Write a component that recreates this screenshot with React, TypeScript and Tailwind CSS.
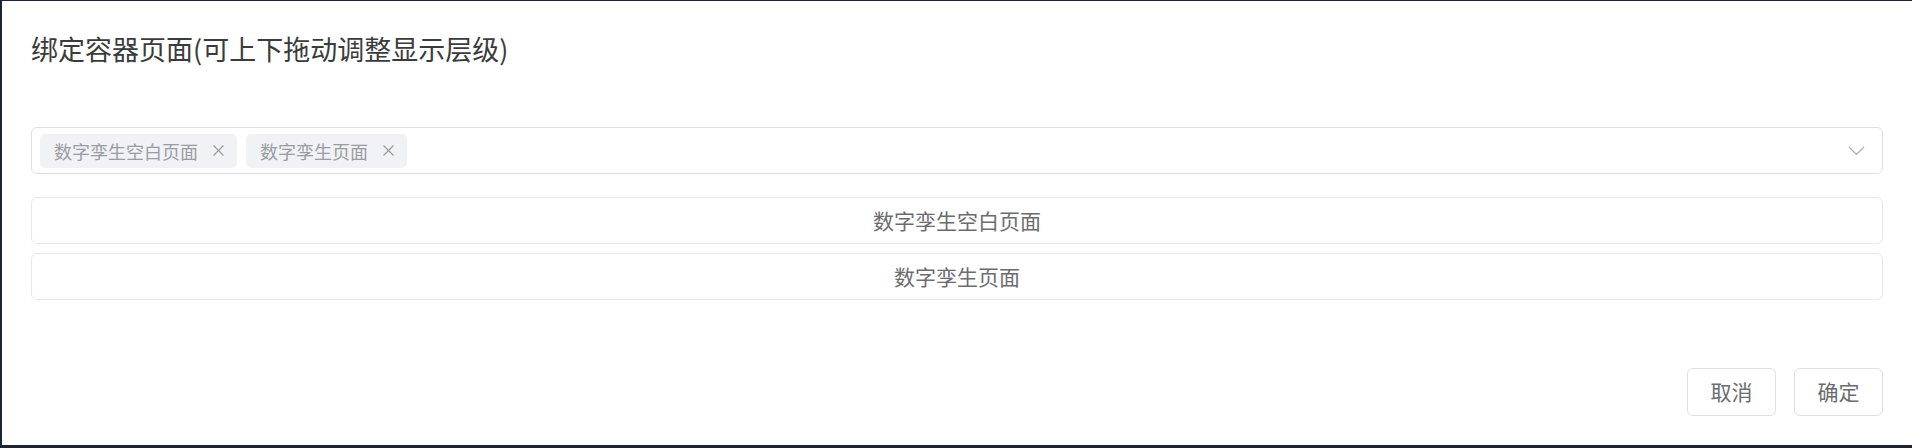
import React from "react";

const font = { fontFamily: '"Noto Sans CJK SC", "Noto Sans", sans-serif' };

function Tag({ label }: { label: string }) {
  return (
    <div className="flex h-[34px] items-center rounded-[5px] bg-[#f0f2f5] pl-[14px] pr-[12px] text-[18px] text-[#9a9ca2]">
      <span className="leading-none">{label}</span>
      <svg className="ml-[14px]" width="13" height="13" viewBox="0 0 13 13" fill="none">
        <path d="M1.5 1.5 L11.5 11.5 M11.5 1.5 L1.5 11.5" stroke="#9a9ca2" strokeWidth="1.2" />
      </svg>
    </div>
  );
}

export default function App() {
  return (
    <div className="h-[448px] w-[1912px] bg-[#1c2533] pl-[2px] pt-[1px] pb-[3px]" style={font}>
      <div className="flex h-full flex-col bg-white px-[29px] pt-[28px]">
        <div className="text-[27px] leading-[40px] text-[#3a3b3d]">绑定容器页面(可上下拖动调整显示层级)</div>
        <div className="mt-[58px] flex h-[47px] items-center rounded-[6px] border border-[#dcdfe6] pl-[8px] pr-[17px]">
          <div className="flex flex-1 items-center gap-[9px]">
            <Tag label="数字孪生空白页面" />
            <Tag label="数字孪生页面" />
          </div>
          <svg width="17" height="10" viewBox="0 0 17 10" fill="none">
            <path d="M1 1 L8.5 8.5 L16 1" stroke="#a8abb2" strokeWidth="1.2" />
          </svg>
        </div>
        <div className="mt-[23px] flex flex-col gap-[9px]">
          <div className="flex h-[47px] items-center justify-center rounded-[6px] border border-[#e4e7ed] text-[21px] text-[#6a6c70]">
            数字孪生空白页面
          </div>
          <div className="flex h-[47px] items-center justify-center rounded-[6px] border border-[#e4e7ed] text-[21px] text-[#6a6c70]">
            数字孪生页面
          </div>
        </div>
        <div className="mt-[68px] flex justify-end gap-[18px]">
          <button className="h-[48px] w-[89px] rounded-[6px] border border-[#dcdfe6] bg-white text-[21px] text-[#6a6c70]">
            取消
          </button>
          <button className="h-[48px] w-[89px] rounded-[6px] border border-[#dcdfe6] bg-white text-[21px] text-[#6a6c70]">
            确定
          </button>
        </div>
      </div>
    </div>
  );
}
